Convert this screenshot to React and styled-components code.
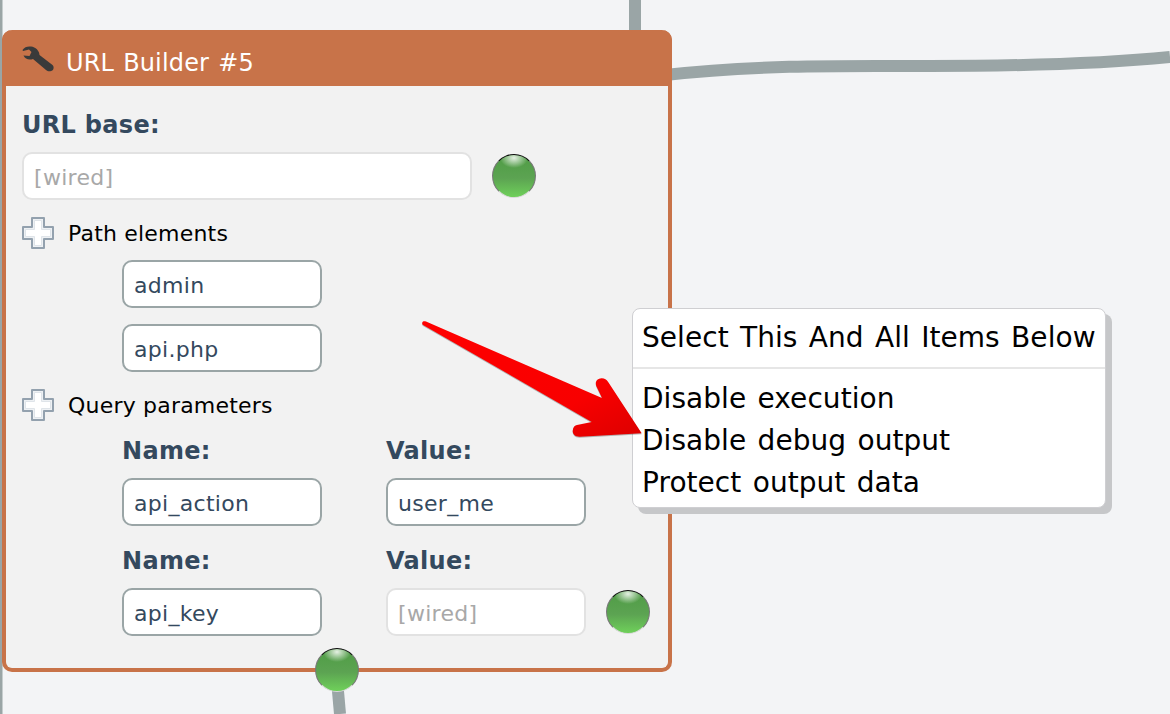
import React from "react";
import styled, { createGlobalStyle } from "styled-components";

const Global = createGlobalStyle`
  html, body { margin: 0; padding: 0; background: #f3f4f6; }
  * { box-sizing: border-box; }
`;
const Canvas = styled.div`
  position: relative; width: 1170px; height: 714px; overflow: hidden;
  background: #f3f4f6; font-family: "DejaVu Sans", Verdana, sans-serif;
`;
const Wires = styled.svg`
  position: absolute; left: 0; top: 0; width: 1170px; height: 714px;
`;
const Node = styled.section`
  position: absolute; left: 2px; top: 30px; width: 670px; height: 642px;
  background: #f2f2f2; border: 4px solid #c87349; border-top: 0; border-radius: 10px;
`;
const Header = styled.header`
  display: flex; align-items: center; gap: 12px; height: 56px; margin: 0 -4px;
  padding: 6px 0 0 20px; background: #c87349; border-radius: 10px 10px 0 0;
  color: #fff; font-size: 24px; letter-spacing: .15px; word-spacing: 1.3px;
`;
const Title = styled.span`
  display: block; margin-top: 3px;
`;
const Body = styled.div`
  display: flex; flex-direction: column; padding: 24px 0 0 16px;
`;
const Label = styled.label`
  display: block; height: 28px; line-height: 30px; font-weight: 700; font-size: 24px;
  color: #34495e; letter-spacing: .3px;
`;
const Row = styled.div`
  display: flex; align-items: center; gap: ${p => p.$gap ?? 20}px; margin-top: ${p => p.$mt ?? 0}px;
`;
const Field = styled.div`
  width: ${p => p.$w}px; height: 48px; padding: 2px 10px 0; display: flex; align-items: center;
  background: #fff; border-radius: 10px; font-size: 22px; letter-spacing: .3px;
  border: 2px solid ${p => (p.$wired ? "#e2e2e2" : "#9aa5a6")};
  color: ${p => (p.$wired ? "#a8a8a8" : "#34495e")};
`;
const Port = styled.span`
  display: block; flex: none; width: 44px; height: 44px; border-radius: 50%;
  border: 1px solid #777; border-top: 1.5px solid #0c0c0c; border-bottom-color: #d8d8d8;
  background:
    radial-gradient(ellipse 14px 10px at 50% 7%, rgba(255,255,255,.85), rgba(255,255,255,0) 100%),
    linear-gradient(#4f9c45, #5ca352 55%, #6fd05a);
`;
const BottomPort = styled(Port)`
  position: absolute; left: 309px; top: 618px;
`;
const Section = styled.div`
  display: flex; align-items: center; gap: 14px; height: 32px; margin-top: ${p => p.$mt}px;
  font-size: 22px; color: #000; letter-spacing: .2px;
`;
const Nested = styled.div`
  display: flex; flex-direction: column; gap: ${p => p.$gap ?? 16}px;
  margin: ${p => p.$mt ?? 0}px 0 0 100px;
`;
const Params = styled.div`
  display: grid; grid-template-columns: 200px 200px auto; column-gap: 64px; align-items: center;
  margin: 15px 0 0 100px;
`;
const HeadSpaced = styled(Label)`
  margin-top: 20px;
`;
const ParamField = styled(Field)`
  margin-top: 14px;
`;
const Spacer = styled.span``;
const ParamPort = styled(Port)`
  margin-left: -44px; margin-top: 14px;
`;
const Menu = styled.div`
  position: absolute; left: 632px; top: 308px; width: 474px; height: 200px;
  background: #fff; border: 1px solid #cfcfd2; border-radius: 8px;
  box-shadow: 6px 6px 0 #c6c7c9; font-size: 28px; color: #000;
  letter-spacing: .05px; word-spacing: 2.4px;
`;
const MenuHead = styled.div`
  height: 60px; padding: 11px 0 0 9px; line-height: 36px; border-bottom: 2px solid #e6e6e6; white-space: nowrap;
`;
const MenuList = styled.div`
  padding: 9px 0 0 9px; display: flex; flex-direction: column;
`;
const MenuItem = styled.div`
  height: 42px; line-height: 42px; white-space: nowrap;
`;
const Arrow = styled.svg`
  position: absolute; left: 420px; top: 318px; width: 225px; height: 122px;
  filter: drop-shadow(0 1px 0 rgba(60,60,60,.35));
`;
const Icon = styled.svg`
  flex: none;
`;
const WrenchIcon = styled(Icon)`
  margin-top: -4px;
`;

const Wrench = () => (
  <WrenchIcon width="32" height="26" viewBox="0 0 32 26">
    <path d="M9 0.5 C5.5 0 2.5 1 .5 4 L1 5 L7 3.5 L9.5 6 L7.5 10 L1.5 9.5 C3 13 7 14.5 11 13 L24 24 C26 26 29 25.6 31 24 C32 22 31.8 20 30.5 19 L17.5 9 C17.5 5 13.5 .8 9 .5Z" fill="#3a3a3a" />
  </WrenchIcon>
);
const Plus = () => (
  <Icon width="32" height="32" viewBox="0 0 32 32">
    <path d="M10 1 H22 V10 H31 V22 H22 V31 H10 V22 H1 V10 H10Z" fill="#eef1f4" stroke="#93a1ae" strokeWidth="2" strokeLinejoin="round" />
    <path d="M12.5 3.5 H19.5 V12.5 H28.5 V19.5 H19.5 V28.5 H12.5 V19.5 H3.5 V12.5 H12.5Z" fill="#fff" stroke="#dfe4e9" strokeWidth="1" />
  </Icon>
);

export default function App() {
  return (
    <Canvas>
      <Global />
      <Wires viewBox="0 0 1170 714" fill="none" stroke="#9aa5a6" strokeWidth="12">
        <path d="M635 0 V36" />
        <path d="M665 75 C760 64 860 66 930 66 C1020 66 1100 64 1170 57" />
        <path d="M337 680 L340 714" />
        <path d="M1 0 V714" strokeWidth="3" />
      </Wires>
      <Node>
        <Header><Wrench /><Title>URL Builder #5</Title></Header>
        <Body>
          <Label>URL base:</Label>
          <Row $mt={14}>
            <Field $w={450} $wired>[wired]</Field>
            <Port />
          </Row>
          <Section $mt={17}><Plus />Path elements</Section>
          <Nested $mt={11}>
            <Field $w={200}>admin</Field>
            <Field $w={200}>api.php</Field>
          </Nested>
          <Section $mt={17}><Plus />Query parameters</Section>
          <Params>
            <Label>Name:</Label>
            <Label>Value:</Label>
            <Spacer />
            <ParamField $w={200}>api_action</ParamField>
            <ParamField $w={200}>user_me</ParamField>
            <Spacer />
            <HeadSpaced>Name:</HeadSpaced>
            <HeadSpaced>Value:</HeadSpaced>
            <Spacer />
            <ParamField $w={200}>api_key</ParamField>
            <ParamField $w={200} $wired>[wired]</ParamField>
            <ParamPort />
          </Params>
        </Body>
        <BottomPort />
      </Node>
      <Menu>
        <MenuHead>Select This And All Items Below</MenuHead>
        <MenuList>
          <MenuItem>Disable execution</MenuItem>
          <MenuItem>Disable debug output</MenuItem>
          <MenuItem>Protect output data</MenuItem>
        </MenuList>
      </Menu>
      <Arrow viewBox="0 0 225 122">
        <defs>
          <linearGradient id="arrowFill" x1="0" y1="0" x2="1" y2="1">
            <stop offset="0" stopColor="#ff0000" />
            <stop offset=".7" stopColor="#f80000" />
            <stop offset="1" stopColor="#dc0000" />
          </linearGradient>
        </defs>
        <path d="M3 3.5 C4 3 5 3.2 6 3.6 L182 80 L176.5 68.5 C174.5 64 177 60.5 181.5 60.3 C184.5 60.2 186.5 61.5 188 63.7 L221.7 115.3 L160 118.7 C155 119 152.5 116 152.7 112.7 C153 109 155 107.3 157 107 L171.7 104 L3 7 C1.8 6 2 4.5 3 3.5Z" fill="url(#arrowFill)" />
      </Arrow>
    </Canvas>
  );
}
